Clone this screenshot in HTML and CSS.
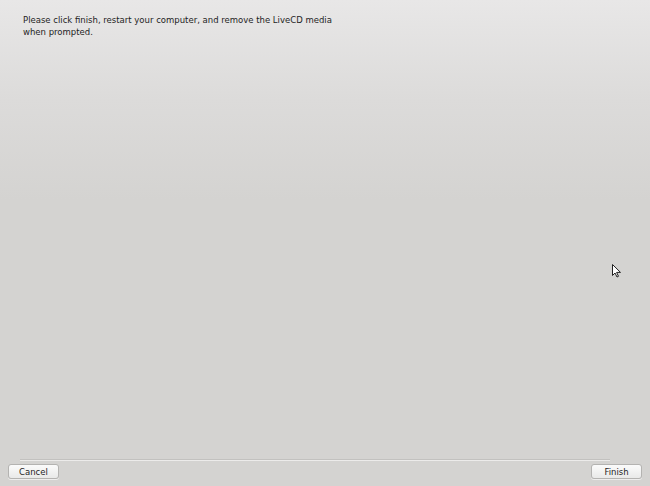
FILE: index.html
```html
<!DOCTYPE html>
<html lang="en">
<head>
    <meta charset="UTF-8">
    <title>Finish</title>
    <link rel="stylesheet" href="styles.css">
</head>
<body>
    <div class="window">
        <div class="content">
            <p class="message">Please click finish, restart your computer, and remove the LiveCD media<br>when prompted.</p>
        </div>
        <div class="separator"></div>
        <div class="buttons">
            <button class="btn">Cancel</button>
            <button class="btn">Finish</button>
        </div>
    </div>
    <svg class="cursor" width="12" height="16" viewBox="0 0 12 16">
        <path d="M1.5 1.5 L1.5 12.5 L4 10 L6 14 L7.5 13.3 L5.6 9.4 L9.5 9.4 Z" fill="#fff" stroke="#222" stroke-width="1" stroke-linejoin="round"/>
    </svg>
</body>
</html>
```

FILE: styles.css
```css
* {
    margin: 0;
    padding: 0;
    box-sizing: border-box;
}
html, body {
    width: 650px;
    height: 486px;
    overflow: hidden;
}
body {
    font-family: "DejaVu Sans", Verdana, sans-serif;
    font-size: 8.5px;
    color: #1e1e1e;
    background: #d4d3d1;
    position: relative;
}
.window {
    height: 486px;
    display: flex;
    flex-direction: column;
    background: linear-gradient(to bottom, #e8e7e7 0%, #dcdbda 100px, #d4d3d1 200px, #d4d3d1 100%);
}
.content {
    flex: 1;
    padding: 14px 23px 0;
}
.message {
    line-height: 12px;
}
.separator {
    height: 2px;
    margin: 0 40px 0 20px;
    border-top: 1px solid #c2c1bf;
    border-bottom: 1px solid #ecebea;
}
.buttons {
    display: flex;
    justify-content: space-between;
    padding: 3px 8px 7px;
}
.btn {
    font-family: "DejaVu Sans", Verdana, sans-serif;
    font-size: 8.5px;
    color: #1e1e1e;
    width: 51px;
    height: 15px;
    border: 1px solid #b4b3b1;
    border-radius: 3px;
    background: linear-gradient(to bottom, #fbfbfb, #e9e9e8);
    box-shadow: 0 1px 0 rgba(255,255,255,0.6);
}
.cursor {
    position: absolute;
    left: 611px;
    top: 263px;
}
```
